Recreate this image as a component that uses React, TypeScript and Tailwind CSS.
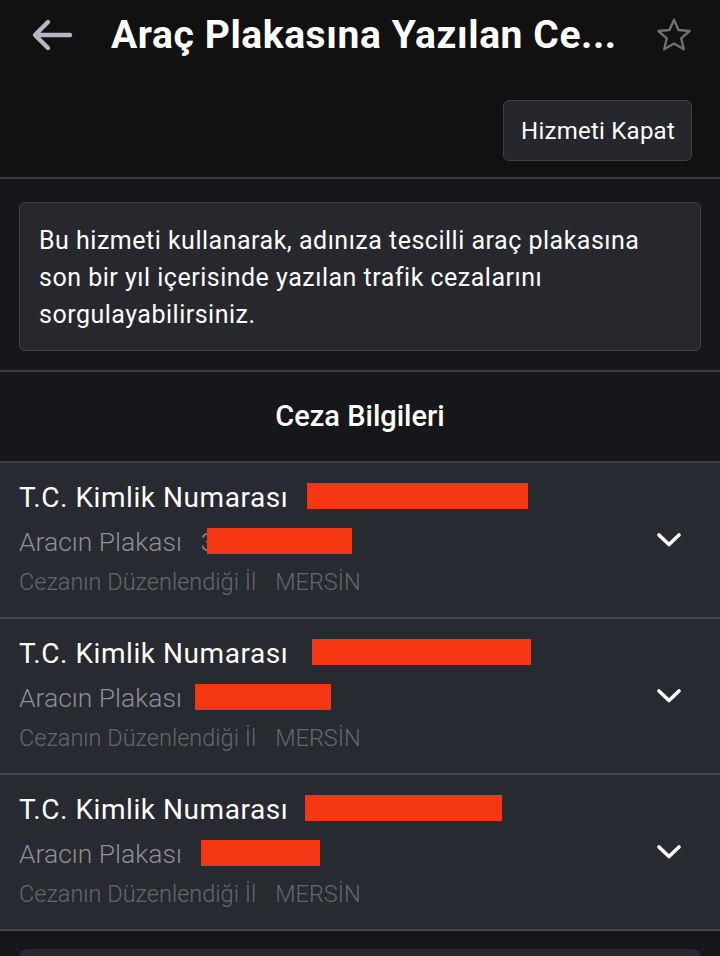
import React from "react";

const font = { fontFamily: "Roboto, 'Noto Sans', sans-serif" };

function Chevron() {
  return (
    <svg width="26" height="16" viewBox="0 0 26 16" fill="none">
      <path d="M3 3 L13 12.5 L23 3" stroke="#ffffff" strokeWidth="3.6" strokeLinecap="round" strokeLinejoin="round" />
    </svg>
  );
}

function Card({ r1, r2 }: { r1: [number, number]; r2: [number, number] }) {
  return (
    <div className="flex items-center bg-[#272a30] border-b-2 border-[#44474c] pl-[19px] pr-[38px] h-[156px]">
      <div className="flex-1 flex flex-col">
        <div className="relative flex items-center h-[30px]">
          <span className="text-[28px] text-white tracking-[0.02em]">T.C. Kimlik Numarası</span>
          <span className="absolute top-[0px] h-[26px] bg-[#f53612]" style={{ left: r1[0], width: r1[1] }} />
        </div>
        <div className="relative flex items-center h-[30px] mt-[14px]">
          <span className="text-[26.5px] font-light text-[#8c8f95]">Aracın Plakası</span>
          <span className="ml-[19px] text-[26.5px] font-light text-[#8c8f95]">3</span>
          <span className="absolute top-[1px] h-[26px] bg-[#f53612]" style={{ left: r2[0], width: r2[1] }} />
        </div>
        <div className="flex items-center h-[28px] mt-[12px]">
          <span className="text-[23.5px] font-light text-[#64676c]">Cezanın Düzenlendiği İl</span>
          <span className="ml-[19px] text-[23.5px] font-light text-[#64676c]">MERSİN</span>
        </div>
      </div>
      <Chevron />
    </div>
  );
}

export default function App() {
  return (
    <div className="w-[720px] h-[956px] overflow-hidden bg-[#16171a]" style={font}>
      <div className="bg-[#111112]">
        <div className="flex items-center h-[70px] pl-[30px] pr-[26px]">
          <svg width="44" height="36" viewBox="0 0 44 36" fill="none">
            <path d="M40 18 H6 M18 5 L5 18 L18 31" stroke="#b7b6c2" strokeWidth="4.4" strokeLinecap="round" strokeLinejoin="round" />
          </svg>
          <div className="ml-[37px] flex-1 text-[39px] font-bold text-white tracking-[0.015em] whitespace-nowrap">Araç Plakasına Yazılan Ce...</div>
          <svg width="40" height="40" viewBox="0 0 24 24" fill="none">
            <path d="M12 2.8 L14.7 9 L21.4 9.6 L16.3 14 L17.9 20.6 L12 17.1 L6.1 20.6 L7.7 14 L2.6 9.6 L9.3 9 Z" stroke="#707070" strokeWidth="1.4" strokeLinejoin="round" />
          </svg>
        </div>
        <div className="flex justify-end pr-[28px] pt-[30px] pb-[16px]">
          <div className="h-[61px] pl-[17px] pr-[16px] flex items-center bg-[#25272c] border border-[#3d4045] rounded-[6px] text-[24px] text-white tracking-[0.01em]">
            Hizmeti Kapat
          </div>
        </div>
      </div>
      <div className="h-[2px] bg-[#3b3d41]" />
      <div className="px-[19px] pt-[23px] pb-[19px]">
        <div className="bg-[#26282d] border border-[#3d4045] rounded-[6px] pl-[19px] pr-[52px] pt-[19px] pb-[17px] text-[25px] leading-[37px] text-white tracking-[0.02em]">
          Bu hizmeti kullanarak, adınıza tescilli araç plakasına son bir yıl içerisinde yazılan trafik cezalarını sorgulayabilirsiniz.
        </div>
      </div>
      <div className="h-[2px] bg-[#3b3d41]" />
      <div className="h-[89px] flex items-center justify-center text-[29px] font-medium text-white">Ceza Bilgileri</div>
      <div className="h-[2px] bg-[#3b3e43]" />
      <Card r1={[288, 221]} r2={[188, 145]} />
      <Card r1={[293, 219]} r2={[176, 136]} />
      <Card r1={[286, 197]} r2={[182, 119]} />
      <div className="px-[19px] pt-[18px]">
        <div className="h-[40px] bg-[#26292f] rounded-t-[8px]" />
      </div>
    </div>
  );
}
